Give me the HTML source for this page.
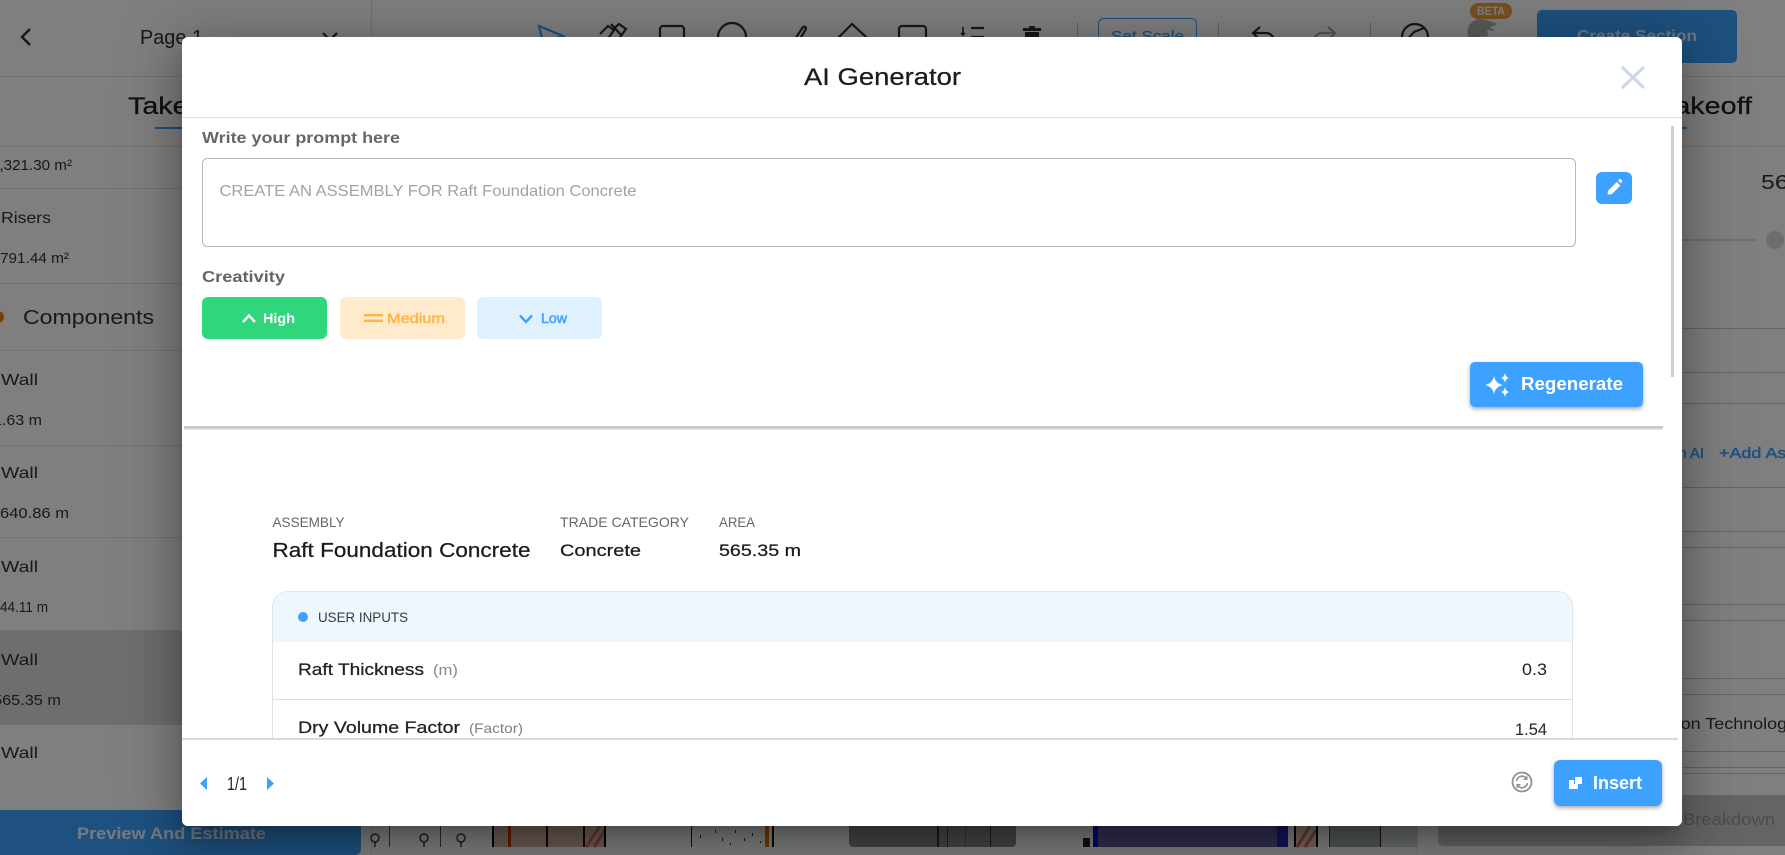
<!DOCTYPE html>
<html lang="en">
<head>
<meta charset="utf-8">
<title>AI Generator</title>
<style>
html,body{margin:0;padding:0;width:1785px;height:855px;overflow:hidden;background:#fff}
body{position:relative;font-family:"Liberation Sans",sans-serif}
svg{position:absolute;left:0;top:0;display:block}
svg text{font-family:"Liberation Sans",sans-serif}
.overlay{position:absolute;left:0;top:0;width:1785px;height:855px;background:rgba(0,0,0,.5)}
.modal{position:absolute;left:182px;top:37px;width:1500px;height:789px;background:#fff;border-radius:6px;box-shadow:0 11px 15px -7px rgba(0,0,0,.2),0 24px 38px 3px rgba(0,0,0,.14),0 9px 46px 8px rgba(0,0,0,.12),0 0 70px 10px rgba(0,0,0,.1)}
.m{stroke-width:.25}
.s{stroke-width:.5}
</style>
</head>
<body>
<!-- Background application -->
<svg width="1785" height="855" viewBox="0 0 1785 855">
  <rect width="1785" height="855" fill="#fff"/>
  <!-- structure lines -->
  <g fill="#e2e2e2">
    <rect x="0" y="76" width="1785" height="1"/>
    <rect x="371" y="0" width="1" height="76"/>
    <rect x="0" y="146" width="371" height="1"/>
    <rect x="0" y="188" width="371" height="1"/>
    <rect x="0" y="283" width="371" height="1"/>
    <rect x="0" y="350" width="371" height="1"/>
    <rect x="0" y="445" width="371" height="1"/>
    <rect x="0" y="537" width="371" height="1"/>
    <rect x="1417" y="146" width="368" height="1"/>
    <rect x="371" y="826" width="1" height="29"/>
    <rect x="1417" y="826" width="1" height="29"/>
  </g>
  <rect x="0" y="630" width="371" height="95" fill="#dcdcdc"/>
  <!-- left panel -->
  <path d="M30 29 L22 37 L30 45" fill="none" stroke="#333" stroke-width="2.4"/>
  <text x="140" y="44" font-size="20" fill="#333" textLength="63" lengthAdjust="spacingAndGlyphs">Page 1</text>
  <path d="M323 33 L330 40 L337 33" fill="none" stroke="#333" stroke-width="2.2"/>
  <text x="128" y="114" font-size="24" fill="#222" stroke="#222" class="m" textLength="92" lengthAdjust="spacingAndGlyphs">Takeoff</text>
  <rect x="155" y="127" width="40" height="2" fill="#3da2ff"/>
  <g fill="#333">
    <text x="-9" y="170" font-size="15" textLength="81" lengthAdjust="spacingAndGlyphs">1,321.30 m²</text>
    <text x="1" y="223" font-size="16" textLength="50" lengthAdjust="spacingAndGlyphs">Risers</text>
    <text x="0" y="263" font-size="15" textLength="69" lengthAdjust="spacingAndGlyphs">791.44 m²</text>
    <text x="23" y="324" font-size="20" textLength="131" lengthAdjust="spacingAndGlyphs">Components</text>
    <text x="1" y="385" font-size="16" textLength="37" lengthAdjust="spacingAndGlyphs">Wall</text>
    <text x="-7" y="425" font-size="15" textLength="49" lengthAdjust="spacingAndGlyphs">1.63 m</text>
    <text x="1" y="478" font-size="16" textLength="37" lengthAdjust="spacingAndGlyphs">Wall</text>
    <text x="0" y="518" font-size="15" textLength="69" lengthAdjust="spacingAndGlyphs">640.86 m</text>
    <text x="1" y="572" font-size="16" textLength="37" lengthAdjust="spacingAndGlyphs">Wall</text>
    <text x="0" y="612" font-size="15" textLength="48" lengthAdjust="spacingAndGlyphs">44.11 m</text>
    <text x="1" y="665" font-size="16" textLength="37" lengthAdjust="spacingAndGlyphs">Wall</text>
    <text x="-7" y="705" font-size="15" textLength="68" lengthAdjust="spacingAndGlyphs">565.35 m</text>
    <text x="1" y="758" font-size="16" textLength="37" lengthAdjust="spacingAndGlyphs">Wall</text>
  </g>
  <circle cx="-2" cy="317" r="6" fill="#f07d12"/>
  <path d="M0 810H361V849a6 6 0 0 1-6 6H0Z" fill="#3da2ff"/>
  <text x="77" y="839" font-size="17" font-weight="bold" fill="#fff" fill-opacity=".9" textLength="189" lengthAdjust="spacingAndGlyphs">Preview And Estimate</text>

  <!-- toolbar icons -->
  <g fill="none" stroke="#333" stroke-width="2.2">
    <path d="M539 26 L563 36 L550 40 L545 50 Z" stroke="#3da2ff"/>
    <path d="M600 34 L608 26 L614 30 L607 40 M612 30 L619 24 L626 29 L618 40"/>
    <path d="M611 24 L622 36"/>
    <rect x="660" y="26" width="24" height="24" rx="3"/>
    <circle cx="732" cy="37" r="14"/>
    <path d="M788 50 L803 27 a2 2 0 0 1 3 2 L792 52"/>
    <path d="M839 37 L852 24 L866 37 V50 H839 Z"/>
    <rect x="899" y="26" width="27" height="24" rx="3"/>
    <path d="M971 28 H984 M971 37 H984"/>
    <path d="M963 27 V35 M961 33 L963 35 L965 33" stroke-width="1.6"/>
    <path d="M1260 27 L1253 33 L1260 40 M1253 33 H1266 a8 8 0 0 1 8 8 V50"/>
    <path d="M1328 27 L1335 33 L1328 40 M1335 33 H1322 a8 8 0 0 0 -8 8 V50" stroke="#aaa"/>
    <circle cx="1415" cy="37" r="13"/>
    <path d="M1403 44 L1414 32 L1424 28"/>
  </g>
  <path d="M1023 28 H1041 V31 H1023 Z M1029 26 H1035 V28 H1029 Z M1025 32 H1039 V50 H1025 Z" fill="#333"/>
  <rect x="1077" y="22" width="1" height="20" fill="#c8c8c8"/>
  <rect x="1218" y="22" width="1" height="20" fill="#c8c8c8"/>
  <rect x="1370" y="22" width="1" height="20" fill="#c8c8c8"/>
  <rect x="1098.5" y="18.5" width="98" height="34" rx="5" fill="none" stroke="#3da2ff"/>
  <text x="1111" y="41" font-size="15" fill="#3da2ff" stroke="#3da2ff" class="m" textLength="73" lengthAdjust="spacingAndGlyphs">Set Scale</text>
  <path d="M1470 24 Q1476 17 1486 20 L1498 24 L1490 27 L1495 31 L1487 30 L1488 36 L1478 37 L1472 42 Q1464 34 1470 24Z" fill="#b4b4b4"/>
  <rect x="1470" y="3" width="42" height="16" rx="8" fill="#f0a040"/>
  <text x="1477" y="15" font-size="11.5" font-weight="bold" fill="#fff" textLength="28" lengthAdjust="spacingAndGlyphs">BETA</text>
  <rect x="1537" y="10" width="200" height="53" rx="5" fill="#3da2ff"/>
  <text x="1577" y="41" font-size="16" font-weight="bold" fill="#fff" fill-opacity=".85" textLength="120" lengthAdjust="spacingAndGlyphs">Create Section</text>

  <!-- drawing bottom -->
  <g fill="none" stroke="#444" stroke-width="1.5">
    <circle cx="375" cy="838" r="4"/>
    <circle cx="424" cy="838" r="4"/>
    <circle cx="461" cy="838" r="4"/>
    <path d="M424 842V847M461 842V847M375 842V847"/>
  </g>
  <g fill="#555">
    <rect x="389" y="826" width="1" height="21"/>
    <rect x="440" y="826" width="1" height="21"/>
  </g>
  <rect x="492" y="826" width="113" height="21" fill="#d4b8a6"/>
  <rect x="492" y="826" width="2" height="21" fill="#000"/>
  <rect x="508" y="826" width="3" height="21" fill="#c43a00"/>
  <rect x="546" y="826" width="2" height="21" fill="#300"/>
  <rect x="583" y="826" width="2" height="21" fill="#300"/>
  <path d="M586 847 L600 826 M594 847 L605 830" stroke="#d0705a" stroke-width="3"/>
  <rect x="604" y="826" width="2" height="21" fill="#000"/>
  <rect x="691" y="826" width="1" height="21" fill="#222"/>
  <g fill="#333">
    <rect x="715" y="830" width="1" height="3"/><rect x="722" y="838" width="1" height="3"/><rect x="735" y="830" width="1" height="3"/><rect x="744" y="838" width="1" height="3"/><rect x="730" y="843" width="1" height="2"/><rect x="752" y="833" width="1" height="3"/><rect x="760" y="841" width="1" height="2"/><rect x="700" y="835" width="1" height="3"/>
  </g>
  <rect x="765" y="826" width="4" height="21" fill="#f07000"/>
  <rect x="772" y="826" width="2" height="21" fill="#000"/>
  <path d="M849 826H1016V843a4 4 0 0 1-4 4H853a4 4 0 0 1-4-4Z" fill="#8c8c8c"/>
  <rect x="937" y="826" width="2" height="21" fill="#333"/>
  <rect x="947" y="826" width="1" height="21" fill="#444"/>
  <rect x="965" y="826" width="1" height="21" fill="#666"/>
  <rect x="990" y="826" width="1" height="21" fill="#333"/>
  <rect x="1083" y="838" width="7" height="9" fill="#222"/>
  <rect x="1093" y="826" width="184" height="21" fill="#655f9e"/>
  <rect x="1093" y="826" width="5" height="21" fill="#1010d0"/>
  <rect x="1277" y="826" width="11" height="21" fill="#2a28b0"/>
  <rect x="1294" y="826" width="2" height="21" fill="#000"/>
  <rect x="1296" y="826" width="20" height="21" fill="#e8c8c0"/>
  <path d="M1297 847 L1310 826 M1305 847 L1316 830" stroke="#d0705a" stroke-width="3"/>
  <rect x="1316" y="826" width="2" height="21" fill="#000"/>
  <rect x="1329" y="826" width="1" height="21" fill="#060"/>
  <rect x="1330" y="826" width="50" height="21" fill="#a8b0a8"/>
  <rect x="1380" y="826" width="1" height="21" fill="#222"/>
  <rect x="1381" y="826" width="36" height="21" fill="#d0d8d0"/>

  <!-- right panel -->
  <text x="1660" y="114" font-size="24" fill="#222" stroke="#222" class="m" textLength="92" lengthAdjust="spacingAndGlyphs">Takeoff</text>
  <rect x="1650" y="127" width="37" height="2" fill="#3da2ff"/>
  <text x="1761" y="189" font-size="20" fill="#333" textLength="76" lengthAdjust="spacingAndGlyphs">565.35</text>
  <rect x="1682" y="239" width="74" height="2" fill="#dedede"/>
  <circle cx="1775" cy="240" r="9" fill="#dcdcdc"/>
  <g fill="#ccc">
    <rect x="1682" y="328" width="103" height="1"/>
    <rect x="1682" y="372" width="103" height="1"/>
    <rect x="1682" y="403" width="103" height="1"/>
    <rect x="1682" y="487" width="103" height="1"/>
    <rect x="1682" y="531" width="103" height="1"/>
    <rect x="1682" y="547" width="103" height="1"/>
    <rect x="1682" y="604" width="103" height="1"/>
    <rect x="1682" y="620" width="103" height="1"/>
    <rect x="1682" y="678" width="103" height="1"/>
    <rect x="1682" y="694" width="103" height="1"/>
    <rect x="1682" y="751" width="103" height="1"/>
    <rect x="1682" y="767" width="103" height="1"/>
    <rect x="1682" y="773" width="103" height="1"/>
  </g>
  <text x="1660" y="458" font-size="15" fill="#3da2ff" stroke="#3da2ff" class="s" textLength="44" lengthAdjust="spacingAndGlyphs">with AI</text>
  <text x="1719" y="458" font-size="15" fill="#3da2ff" stroke="#3da2ff" class="s" textLength="124" lengthAdjust="spacingAndGlyphs">+Add Assembly</text>
  <text x="1600" y="729" font-size="16" fill="#333" textLength="196" lengthAdjust="spacingAndGlyphs">Construction Technology</text>
  <rect x="1438" y="795" width="360" height="51" rx="6" fill="#c8c8c8"/>
  <text x="1683" y="825" font-size="17" fill="#999" textLength="92" lengthAdjust="spacingAndGlyphs">Breakdown</text>
</svg>

<div class="overlay"></div>
<div class="modal"></div>

<!-- Modal content -->
<svg width="1785" height="855" viewBox="0 0 1785 855">
  <text x="804" y="85" font-size="24" fill="#1c1c1c" stroke="#1c1c1c" class="m" textLength="157" lengthAdjust="spacingAndGlyphs">AI Generator</text>
  <path d="M1622 67 L1644 88 M1644 67 L1622 88" stroke="#cbd8e8" stroke-width="3.2" fill="none"/>
  <rect x="182" y="117" width="1500" height="1" fill="#dedede"/>

  <!-- scrollbar -->
  <rect x="1671" y="126" width="3" height="251" fill="#cfcfcf"/>

  <text x="202" y="143" font-size="16" font-weight="bold" fill="#666" textLength="198" lengthAdjust="spacingAndGlyphs">Write your prompt here</text>
  <rect x="202.5" y="158.5" width="1373" height="88" rx="5" fill="#fff" stroke="#b8b8b8"/>
  <text x="219.5" y="196" font-size="16" fill="#a2a2a2" textLength="417" lengthAdjust="spacingAndGlyphs">CREATE AN ASSEMBLY FOR Raft Foundation Concrete</text>

  <rect x="1596" y="172" width="36" height="32" rx="6" fill="#3da2ff"/>
  <path d="M1607.5 194.5 L1608 190.8 L1616.8 182 L1620.4 185.6 L1611.6 194.4 Z M1618 180.6 L1619.4 179.2 a1 1 0 0 1 1.4 0 L1622 180.4 a1 1 0 0 1 0 1.4 L1620.8 183.2 Z" fill="#fff"/>

  <text x="202" y="282" font-size="16" font-weight="bold" fill="#666" textLength="83" lengthAdjust="spacingAndGlyphs">Creativity</text>

  <rect x="202" y="297" width="125" height="42" rx="6" fill="#2fd67c"/>
  <path d="M243 322 L249 315.5 L255 322" fill="none" stroke="#fff" stroke-width="2.4"/>
  <text x="263" y="323" font-size="14" font-weight="bold" fill="#fff" textLength="32" lengthAdjust="spacingAndGlyphs">High</text>

  <rect x="340" y="297" width="125" height="42" rx="6" fill="#ffebcc"/>
  <rect x="364" y="314" width="19" height="2.4" fill="#ffb547"/>
  <rect x="364" y="319.6" width="19" height="2.4" fill="#ffb547"/>
  <text x="387" y="323" font-size="14" fill="#ffb547" stroke="#ffb547" class="s" textLength="58" lengthAdjust="spacingAndGlyphs">Medium</text>

  <rect x="477" y="297" width="125" height="42" rx="6" fill="#dff0ff"/>
  <path d="M520 315.5 L526 322 L532 315.5" fill="none" stroke="#3da2ff" stroke-width="2.4"/>
  <text x="541" y="323" font-size="14" fill="#3da2ff" stroke="#3da2ff" class="s" textLength="26" lengthAdjust="spacingAndGlyphs">Low</text>

  <!-- Regenerate -->
  <defs>
    <filter id="bs" x="-10%" y="-20%" width="120%" height="150%">
      <feDropShadow dx="0" dy="2" stdDeviation="2" flood-color="#000" flood-opacity=".35"/>
    </filter>
    <linearGradient id="dg" x1="0" y1="0" x2="0" y2="1">
      <stop offset="0" stop-color="#c4c4c4"/><stop offset=".6" stop-color="#cfcfcf"/><stop offset="1" stop-color="#f2f2f2"/>
    </linearGradient>
  </defs>
  <rect x="1470" y="362" width="173" height="45" rx="5" fill="#3da2ff" filter="url(#bs)"/>
  <path d="M1494 376 Q1495.5 383.5 1503 385 Q1495.5 386.5 1494 394 Q1492.5 386.5 1485 385 Q1492.5 383.5 1494 376Z M1505 373 Q1505.7 377.3 1509 378 Q1505.7 378.7 1505 383 Q1504.3 378.7 1501 378 Q1504.3 377.3 1505 373Z M1505 387 Q1505.7 391.3 1509 392 Q1505.7 392.7 1505 397 Q1504.3 392.7 1501 392 Q1504.3 391.3 1505 387Z" fill="#fff"/>
  <text x="1521" y="390" font-size="18" font-weight="bold" fill="#fff" textLength="102" lengthAdjust="spacingAndGlyphs">Regenerate</text>

  <rect x="184" y="426" width="1479" height="4" fill="url(#dg)"/>

  <!-- Summary -->
  <g font-size="14" fill="#666">
    <text x="272.5" y="527" textLength="72" lengthAdjust="spacingAndGlyphs">ASSEMBLY</text>
    <text x="560" y="527" textLength="129" lengthAdjust="spacingAndGlyphs">TRADE CATEGORY</text>
    <text x="719" y="527" textLength="36" lengthAdjust="spacingAndGlyphs">AREA</text>
  </g>
  <text x="272.5" y="557" font-size="20" fill="#1c1c1c" stroke="#1c1c1c" class="m" textLength="258" lengthAdjust="spacingAndGlyphs">Raft Foundation Concrete</text>
  <text x="560" y="556" font-size="17" fill="#1c1c1c" stroke="#1c1c1c" class="m" textLength="81" lengthAdjust="spacingAndGlyphs">Concrete</text>
  <text x="719" y="556" font-size="17" fill="#1c1c1c" stroke="#1c1c1c" class="m" textLength="82" lengthAdjust="spacingAndGlyphs">565.35 m</text>

  <!-- Card -->
  <path d="M272.5 745 V607 a15.5 15.5 0 0 1 15.5 -15.5 H1557 a15.5 15.5 0 0 1 15.5 15.5 V745" fill="#fff" stroke="#dfe4ea"/>
  <path d="M273 642 V607 a15 15 0 0 1 15 -15 H1557 a15 15 0 0 1 15 15 V642 Z" fill="#eef6fe"/>
  <circle cx="303" cy="617" r="5" fill="#3da2ff"/>
  <text x="318" y="622" font-size="14" fill="#3a3a3a" textLength="90" lengthAdjust="spacingAndGlyphs">USER INPUTS</text>
  <text x="298" y="675" font-size="17" fill="#222" stroke="#222" class="m" textLength="126" lengthAdjust="spacingAndGlyphs">Raft Thickness</text>
  <text x="433" y="675" font-size="15" fill="#888" textLength="25" lengthAdjust="spacingAndGlyphs">(m)</text>
  <text x="1522" y="675" font-size="17" fill="#222" textLength="25" lengthAdjust="spacingAndGlyphs">0.3</text>
  <rect x="273" y="699" width="1299" height="1" fill="#dedede"/>
  <text x="298" y="733" font-size="17" fill="#222" stroke="#222" class="m" textLength="162" lengthAdjust="spacingAndGlyphs">Dry Volume Factor</text>
  <text x="469" y="733" font-size="14" fill="#808080" textLength="54" lengthAdjust="spacingAndGlyphs">(Factor)</text>
  <text x="1515" y="735" font-size="17" fill="#222" textLength="32" lengthAdjust="spacingAndGlyphs">1.54</text>

  <!-- Footer -->
  <path d="M182 739 H1682 V820 a6 6 0 0 1 -6 6 H188 a6 6 0 0 1 -6 -6 Z" fill="#fff"/>
  <rect x="182" y="738" width="1496" height="2" fill="#dadada"/>
  <path d="M207 777 V790 L200 783.5 Z M267 777 V790 L274 783.5 Z" fill="#3da2ff"/>
  <text x="227" y="790" font-size="18" fill="#222" textLength="20" lengthAdjust="spacingAndGlyphs">1/1</text>

  <circle cx="1522" cy="782" r="9.5" fill="none" stroke="#909090" stroke-width="1.8"/>
  <path d="M1516.5 781 a5.6 5.6 0 0 1 9.6 -3 M1527.5 783 a5.6 5.6 0 0 1 -9.6 3" fill="none" stroke="#909090" stroke-width="1.6"/>
  <path d="M1527.5 775.5 V780 H1523 Z M1516.5 788.5 V784 H1521 Z" fill="#909090"/>

  <rect x="1554" y="760" width="108" height="46" rx="6" fill="#3da2ff" filter="url(#bs)"/>
  <path d="M1569 780 H1574 V784 H1578 V789 H1569 Z M1575 777 H1582 V784 H1575 Z" fill="#fff"/>
  <text x="1593" y="789" font-size="18" font-weight="bold" fill="#fff" textLength="49" lengthAdjust="spacingAndGlyphs">Insert</text>
</svg>
</body>
</html>
